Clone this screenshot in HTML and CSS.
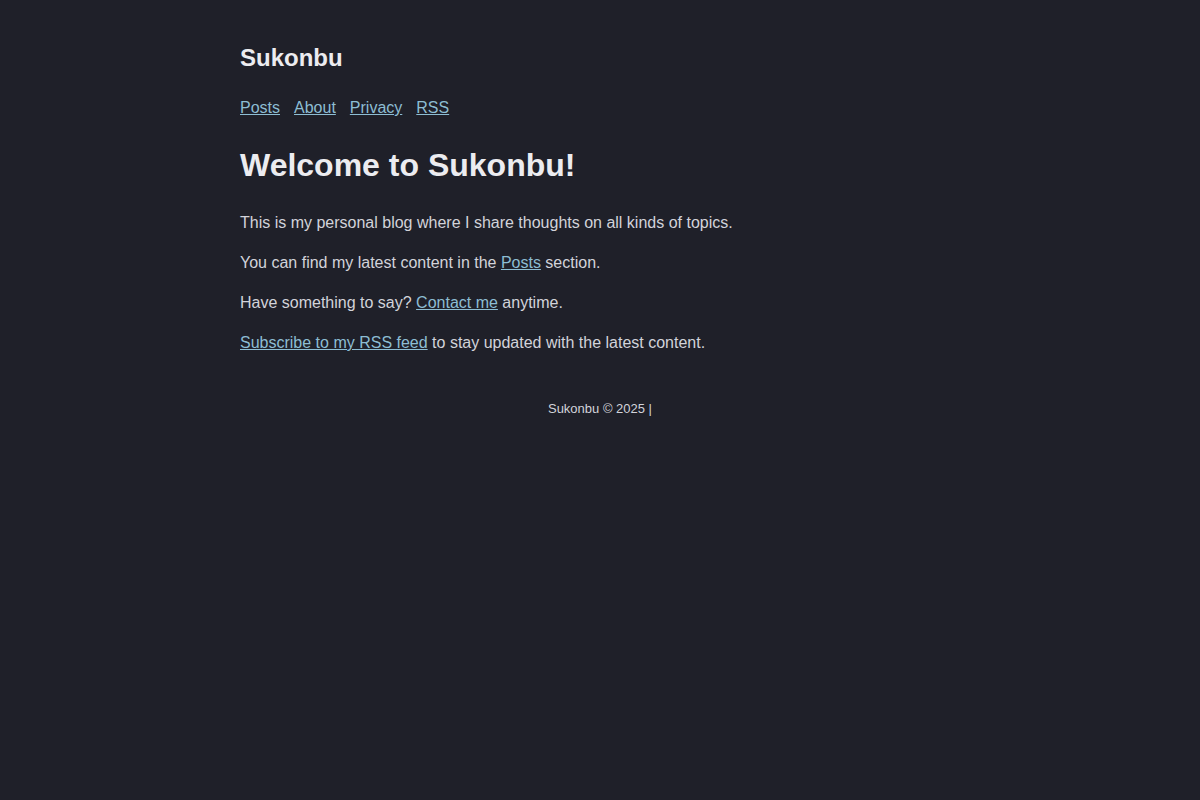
FILE: index.html
```html
<!DOCTYPE html>
<html lang="en">
<head>
<meta charset="utf-8">
<title>Sukonbu</title>
<link rel="stylesheet" href="styles.css">
</head>
<body>
<div class="page">
  <header class="site-header">
    <div class="site-title">Sukonbu</div>
    <nav class="site-nav">
      <a href="#">Posts</a>
      <a href="#">About</a>
      <a href="#">Privacy</a>
      <a href="#">RSS</a>
    </nav>
  </header>
  <main class="content">
    <h1 class="page-title">Welcome to Sukonbu!</h1>
    <p>This is my personal blog where I share thoughts on all kinds of topics.</p>
    <p>You can find my latest content in the <a href="#">Posts</a> section.</p>
    <p>Have something to say? <a href="#">Contact me</a> anytime.</p>
    <p><a href="#">Subscribe to my RSS feed</a> to stay updated with the latest content.</p>
  </main>
  <footer class="site-footer">Sukonbu © 2025 |</footer>
</div>
</body>
</html>
```

FILE: styles.css
```css
html, body {
  margin: 0;
  padding: 0;
  background: #1f2029;
}
body {
  font-family: "Liberation Sans", Arial, sans-serif;
  color: #d2d3da;
  font-size: 16px;
  line-height: 24px;
}
a {
  color: #8dbdd3;
  text-decoration: underline;
}
.page {
  max-width: 720px;
  margin: 0 auto;
  padding-top: 44px;
}
.site-title {
  font-size: 24px;
  line-height: 28px;
  font-weight: bold;
  color: #ececf0;
}
.site-nav {
  display: flex;
  gap: 14px;
  margin-top: 24px;
}
.page-title {
  font-size: 32px;
  line-height: 37px;
  font-weight: bold;
  color: #ececf0;
  margin: 27px 0 27px;
}
.content p {
  margin: 0 0 16px;
}
.site-footer {
  text-align: center;
  font-size: 13px;
  line-height: 16px;
  color: #d2d3da;
  margin-top: 46px;
}
```
